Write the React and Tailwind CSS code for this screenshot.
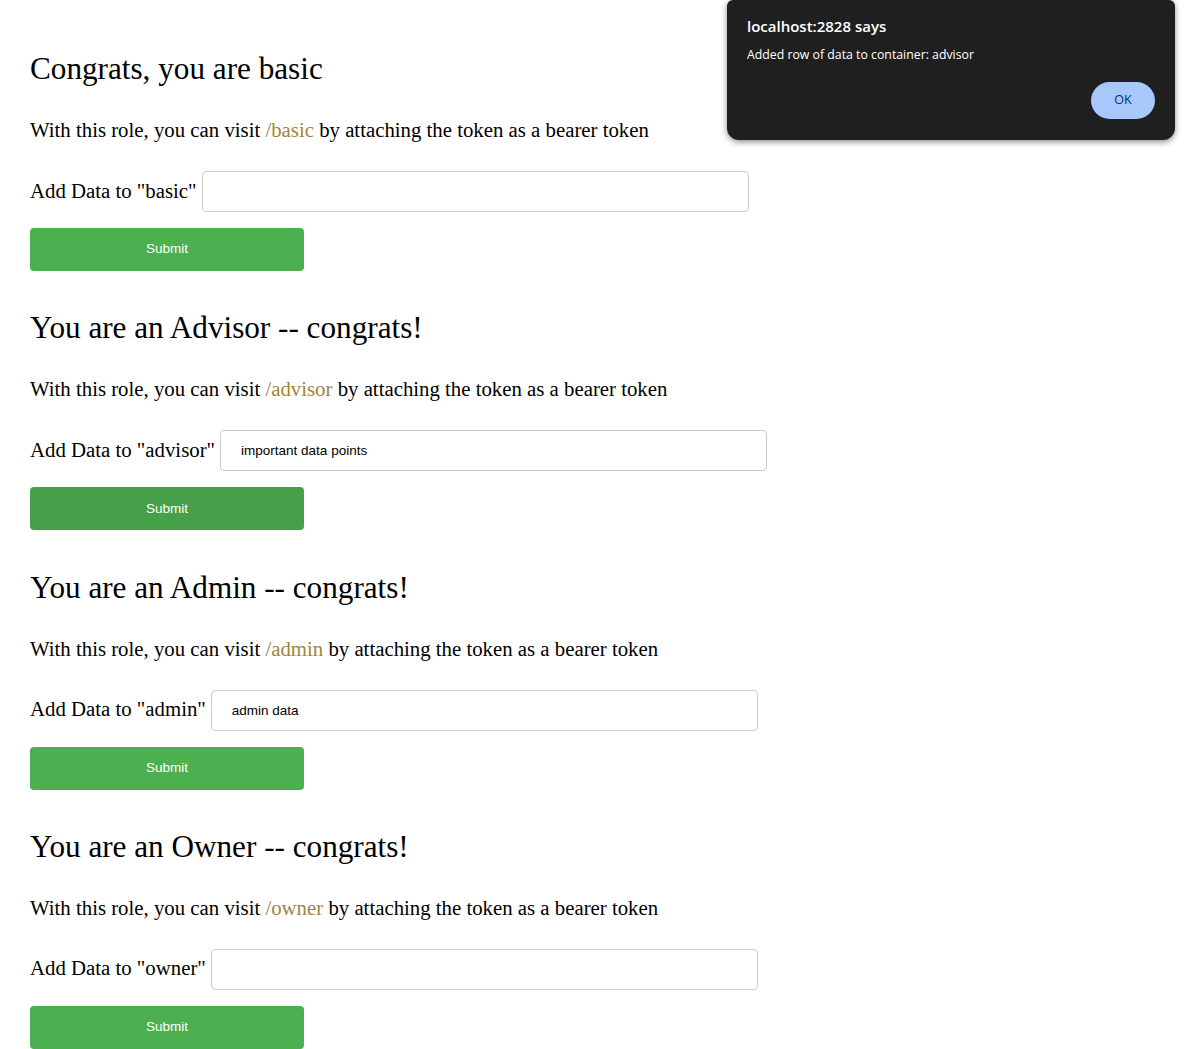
import { useState } from "react";

const roles = [
  { title: "Congrats, you are basic", path: "basic", value: "" },
  { title: "You are an Advisor -- congrats!", path: "advisor", value: "important data points", hover: true },
  { title: "You are an Admin -- congrats!", path: "admin", value: "admin data" },
  { title: "You are an Owner -- congrats!", path: "owner", value: "" },
];

const RoleSection = ({ title, path, value, hover }) => {
  const [text, setText] = useState(value);

  return (
    <div className="mb-[41.3px]">
      <h2 className="text-[31.2px] leading-[32px] font-normal">{title}</h2>

      <p className="mt-[33px] text-[20.8px] leading-[23px]">
        With this role, you can visit <span className="text-[#a0853d]">/{path}</span> by attaching the token as a bearer token
      </p>

      <div className="mt-[30px] flex items-center gap-[5px]">
        <label className="text-[20.8px] leading-[23px] -mt-[3px]">Add Data to "{path}"</label>
        <input
          value={text}
          onChange={(e) => setText(e.target.value)}
          className="w-[547px] h-[41px] border border-[#cccccc] rounded-[4px] pl-[20px] text-[13.5px] font-['Liberation_Sans',Arial,sans-serif] outline-none"
        />
      </div>

      <button
        className={`mt-[16px] w-[274px] h-[43px] rounded-[4px] text-white text-[13.5px] font-['Liberation_Sans',Arial,sans-serif] ${hover ? "bg-[#45a049]" : "bg-[#4caf50]"}`}
      >
        Submit
      </button>
    </div>
  );
};

const AlertBox = () => {
  return (
    <div className="absolute top-0 left-[727px] w-[448px] h-[140px] bg-[#1f1f1f] rounded-b-[12px] rounded-t-[6px] shadow-[0_2px_6px_rgba(0,0,0,0.45)] px-[20px] pt-[16px] font-['Open_Sans',Roboto,sans-serif] text-white">
      <div className="text-[15px] leading-[20px] font-semibold">localhost:2828 says</div>
      <div className="mt-[10px] text-[12.3px] leading-[18px]">Added row of data to container: advisor</div>
      <div className="flex justify-end mt-[18px]">
        <button className="w-[64px] h-[37px] rounded-full bg-[#a8c7fa] text-[#062e6f] text-[12.5px] font-medium">
          OK
        </button>
      </div>
    </div>
  );
};

export default function App() {
  return (
    <div className="relative min-h-[1049px] bg-white text-black pl-[30px] pt-[53px] font-['Liberation_Serif','Times_New_Roman',serif]">
      {roles.map((r) => (
        <RoleSection key={r.path} {...r} />
      ))}
      <AlertBox />
    </div>
  );
}
